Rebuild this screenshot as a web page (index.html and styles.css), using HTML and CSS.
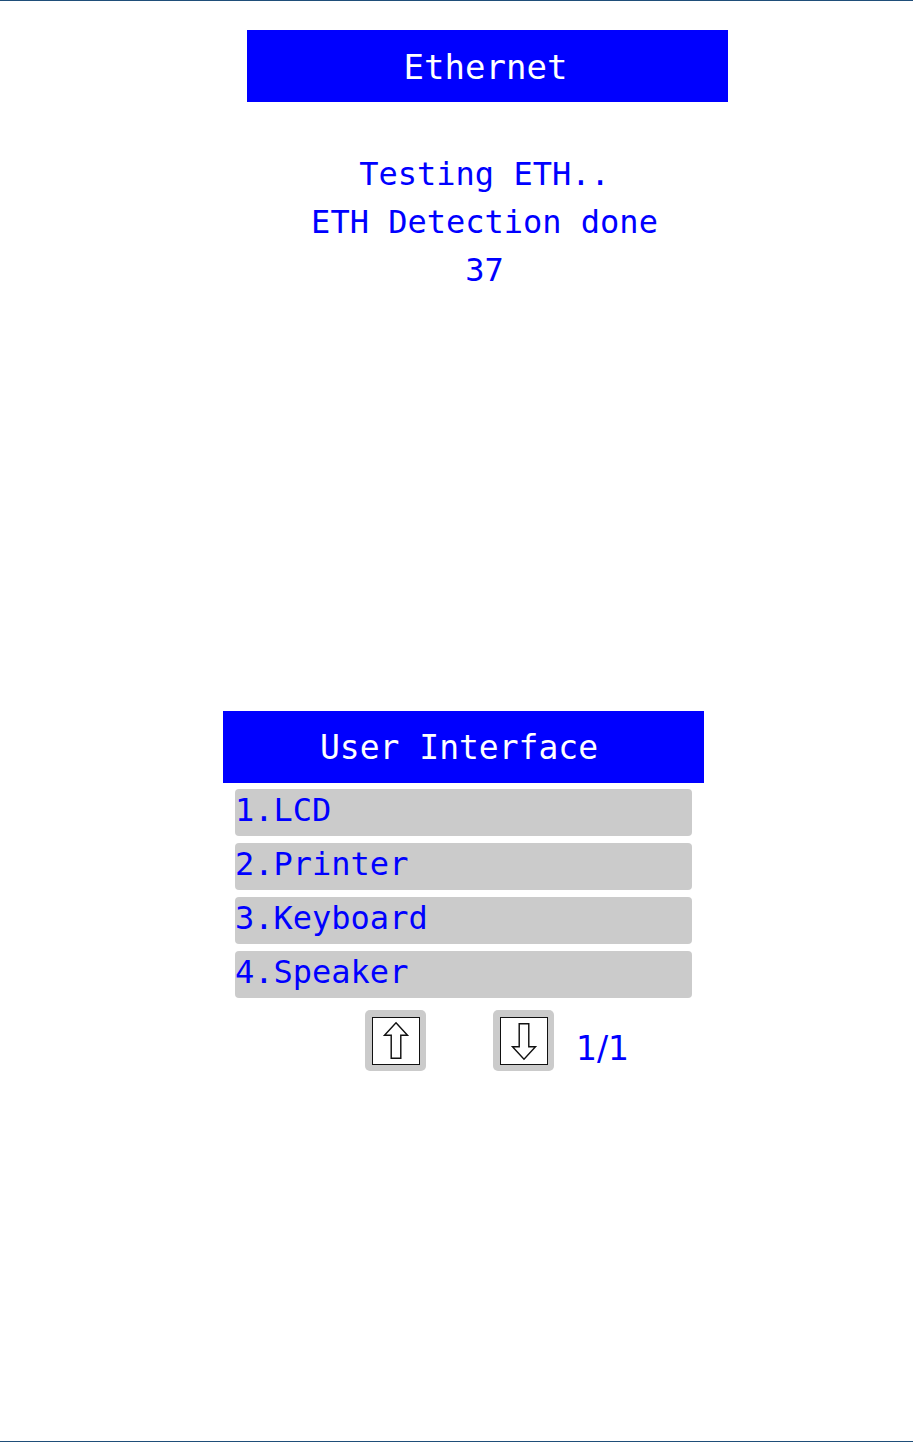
FILE: index.html
```html
<!DOCTYPE html>
<html>
<head>
<meta charset="utf-8">
<link rel="stylesheet" href="styles.css">
</head>
<body>
<div class="page">
  <section class="screen screen-eth">
    <div class="title title-eth">Ethernet</div>
    <div class="messages">
      <div class="msg">Testing ETH..</div>
      <div class="msg">ETH Detection done</div>
      <div class="msg">37</div>
    </div>
  </section>

  <section class="screen screen-ui">
    <div class="title title-ui">User Interface</div>
    <div class="menu">
      <div class="item">1.LCD</div>
      <div class="item">2.Printer</div>
      <div class="item">3.Keyboard</div>
      <div class="item">4.Speaker</div>
    </div>
    <div class="nav">
      <div class="btn btn-up">
        <div class="btn-inner">
          <svg viewBox="0 0 48 48" width="46" height="46"><polygon points="24,5 36,18 29,18 29,42 19,42 19,18 12,18" fill="#fff" stroke="#111" stroke-width="1.5" stroke-linejoin="miter"/></svg>
        </div>
      </div>
      <div class="btn btn-down">
        <div class="btn-inner">
          <svg viewBox="0 0 48 48" width="46" height="46"><polygon points="19,6 29,6 29,30 36,30 24,43 12,30 19,30" fill="#fff" stroke="#111" stroke-width="1.5" stroke-linejoin="miter"/></svg>
        </div>
      </div>
      <div class="pager">1/1</div>
    </div>
  </section>
</div>
</body>
</html>
```

FILE: styles.css
```css
html, body {
  margin: 0;
  padding: 0;
  background: #fff;
}

.page {
  border-top: 1px solid #1f4e79;
  border-bottom: 1px solid #1f4e79;
  height: 1440px;
  display: flex;
  flex-direction: column;
}

.screen {
  width: 481px;
  display: flex;
  flex-direction: column;
}

.screen-eth {
  margin-left: 247px;
  margin-top: 29px;
}

.screen-ui {
  margin-left: 223px;
  margin-top: 417px;
}

.title {
  background: #0000ff;
  color: #fff;
  height: 72px;
  line-height: 74px;
  text-align: center;
  font-family: "DejaVu Sans Mono", monospace;
  font-size: 33px;
}

.title-eth {
  font-size: 34px;
  padding-right: 4px;
}

.title-ui {
  padding-right: 9px;
}

.messages {
  margin-top: 48px;
  padding-right: 6px;
  display: flex;
  flex-direction: column;
  align-items: center;
  font-family: "DejaVu Sans Mono", monospace;
  font-size: 32px;
  line-height: 48px;
  color: #0000ff;
}

.menu {
  margin-top: 6px;
  margin-left: 12px;
  width: 457px;
  display: flex;
  flex-direction: column;
  gap: 7px;
}

.item {
  background: #cbcbcb;
  border-radius: 4px;
  height: 47px;
  line-height: 43px;
  font-family: "DejaVu Sans Mono", monospace;
  font-size: 32px;
  color: #0000ff;
  white-space: pre;
}

.nav {
  margin-top: 12px;
  margin-left: 142px;
  display: flex;
  align-items: flex-start;
}

.btn {
  width: 61px;
  height: 61px;
  background: #cbcbcb;
  border-radius: 5px;
  display: flex;
  align-items: center;
  justify-content: center;
}

.btn-down {
  margin-left: 67px;
}

.btn-inner {
  width: 48px;
  height: 48px;
  box-sizing: border-box;
  border: 1.5px solid #111;
  background: #fff;
  display: flex;
  align-items: center;
  justify-content: center;
}

.btn-inner svg {
  display: block;
}

.pager {
  margin-left: 22px;
  margin-top: 19px;
  font-family: "DejaVu Sans", sans-serif;
  font-size: 33px;
  line-height: 40px;
  color: #0000ff;
}
```
